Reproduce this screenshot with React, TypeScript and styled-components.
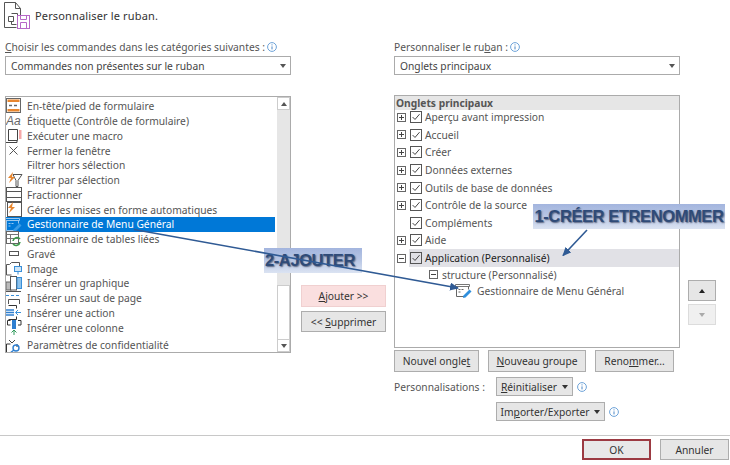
import React from "react";
import styled, { createGlobalStyle } from "styled-components";

const Global = createGlobalStyle`
  html, body { margin: 0; padding: 0; background: #fff; }
  #root { width: 730px; height: 465px; overflow: hidden; }
`;

const Dialog = styled.div`
  position: relative;
  width: 730px;
  height: 465px;
  display: flex;
  flex-direction: column;
  background: #fff;
  color: #444;
  font-family: "Noto Sans", "Open Sans", sans-serif;
  font-size: 10.25px;
  overflow: hidden;
`;
const Header = styled.div`
  height: 33px;
  display: flex;
  align-items: flex-start;
  padding: 2px 0 0 4px;
  box-sizing: border-box;
  gap: 4px;
`;
const Title = styled.div`
  font-size: 11px;
  line-height: 28px;
  color: #333;
  letter-spacing: 0.15px;
`;
const Main = styled.div`
  height: 402px;
  box-sizing: border-box;
  padding: 0 0 0 5px;
  display: flex;
  align-items: flex-start;
`;
const LeftCol = styled.div`
  width: 286px;
  display: flex;
  flex-direction: column;
`;
const Middle = styled.div`
  width: 85px;
  margin: 252px 0 0 10px;
  display: flex;
  flex-direction: column;
  gap: 4px;
`;
const RightCol = styled.div`
  width: 286px;
  margin-left: 8px;
  display: flex;
  flex-direction: column;
`;
const FieldLabel = styled.div`
  height: 23px;
  box-sizing: border-box;
  padding-top: 5px;
  display: flex;
  align-items: center;
  gap: 2px;
  color: #555;
`;
const Select = styled.div`
  height: 19px;
  box-sizing: border-box;
  border: 1px solid #ababab;
  display: flex;
  align-items: center;
  justify-content: space-between;
  padding: 0 4px 0 5px;
  color: #444;
`;
const Caret = styled.span<{ $color?: string }>`
  width: 0;
  height: 0;
  display: inline-block;
  border-left: 3.5px solid transparent;
  border-right: 3.5px solid transparent;
  border-top: 4px solid ${(p) => p.$color || "#555"};
`;
const UCaret = styled.span<{ $color?: string }>`
  width: 0;
  height: 0;
  display: inline-block;
  border-left: 3.5px solid transparent;
  border-right: 3.5px solid transparent;
  border-bottom: 4px solid ${(p) => p.$color || "#555"};
`;
const LeftList = styled.div`
  margin-top: 21px;
  height: 257px;
  box-sizing: border-box;
  border: 1px solid #ababab;
  display: flex;
  overflow: hidden;
`;
const LeftItems = styled.div`
  flex: 1;
  min-width: 0;
  padding-top: 2px;
  overflow: hidden;
`;
const LeftRow = styled.div<{ $selected?: boolean; $gap?: number }>`
  height: 14.75px;
  display: flex;
  align-items: center;
  white-space: nowrap;
  margin-top: ${(p) => p.$gap || 0}px;
  background: ${(p) => (p.$selected ? "#0078d7" : "transparent")};
  color: ${(p) => (p.$selected ? "#fff" : "#555")};
`;
const IconSlot = styled.span`
  width: 21px;
  height: 14px;
  flex: none;
  display: flex;
  align-items: center;
  justify-content: flex-start;
  & > svg {
    margin-left: -3px;
    flex: none;
  }
`;
const Scrollbar = styled.div`
  width: 13px;
  flex: none;
  margin-left: 2px;
  background: #e6e6e6;
  display: flex;
  flex-direction: column;
`;
const ScrollEnd = styled.div`
  height: 13px;
  flex: none;
  background: #fff;
  border: 1px solid #ccc;
  box-sizing: border-box;
  display: flex;
  align-items: center;
  justify-content: center;
`;
const ScrollTrack = styled.div`
  height: 175px;
  flex: none;
`;
const ScrollThumb = styled.div`
  flex: 1;
  background: #fff;
  border-left: 1px solid #ccc;
  border-right: 1px solid #ccc;
  border-top: 1px solid #ccc;
`;
const Btn = styled.div<{ $w?: number; $h?: number; $pink?: boolean; $disabled?: boolean }>`
  width: ${(p) => (p.$w ? p.$w + "px" : "auto")};
  height: ${(p) => p.$h || 22}px;
  box-sizing: border-box;
  display: flex;
  align-items: center;
  justify-content: center;
  gap: 5px;
  flex: none;
  color: #333;
  white-space: nowrap;
  background: ${(p) => (p.$pink ? "#fadfdf" : p.$disabled ? "#f0f0f0" : "#e6e6e6")};
  border: 1px solid ${(p) => (p.$pink ? "#f0d0d0" : p.$disabled ? "#dcdcdc" : "#adadad")};
`;
const OkBtn = styled(Btn)`
  border: 2px solid #9c3a42;
  background: #e8e8e8;
`;
const RightList = styled.div`
  margin-top: 20px;
  height: 253px;
  box-sizing: border-box;
  border: 1px solid #ababab;
  display: flex;
  flex-direction: column;
  overflow: hidden;
`;
const TreeHead = styled.div`
  height: 14px;
  line-height: 14px;
  padding-left: 1px;
  flex: none;
  background: #e6e6e6;
  font-weight: 700;
  color: #555;
`;
const TreeRow = styled.div`
  height: 17.6px;
  display: flex;
  align-items: center;
  flex: none;
  color: #555;
  white-space: nowrap;
  padding-left: 2px;
`;
const Expander = styled.span<{ $hidden?: boolean }>`
  width: 9px;
  height: 9px;
  flex: none;
  box-sizing: border-box;
  border: 1px solid #666;
  position: relative;
  visibility: ${(p) => (p.$hidden ? "hidden" : "visible")};
  &::before {
    content: "";
    position: absolute;
    left: 1px;
    right: 1px;
    top: 3px;
    height: 1px;
    background: #444;
  }
`;
const ExpanderPlus = styled(Expander)`
  &::after {
    content: "";
    position: absolute;
    top: 1px;
    bottom: 1px;
    left: 3px;
    width: 1px;
    background: #444;
  }
`;
const Check = styled.span<{ $ml?: number }>`
  width: 12px;
  height: 12px;
  flex: none;
  margin-left: ${(p) => p.$ml ?? 4}px;
  box-sizing: border-box;
  border: 1px solid #555;
  display: flex;
  align-items: center;
  justify-content: center;
`;
const TreeText = styled.span<{ $strong?: boolean }>`
  margin-left: 3px;
  color: ${(p) => (p.$strong ? "#222" : "#555")};
  flex: 1;
  align-self: stretch;
  display: flex;
  align-items: center;
`;
const HighlightBand = styled.div`
  flex: 1;
  align-self: stretch;
  margin-left: 3px;
  background: #e1e1e6;
  display: flex;
  align-items: center;
`;
const GroupRow = styled.div`
  height: 16px;
  flex: none;
  display: flex;
  align-items: center;
  padding-left: 34px;
  gap: 4px;
  color: #555;
`;
const CommandRow = styled.div`
  height: 16px;
  flex: none;
  display: flex;
  align-items: center;
  padding-left: 58px;
  gap: 4px;
  color: #555;
  white-space: nowrap;
`;
const TreeArea = styled.div`
  margin-top: -1.5px;
  display: flex;
  flex-direction: column;
`;
const ActionRow = styled.div`
  margin-top: 2px;
  display: flex;
  gap: 9px;
`;
const CustomRow = styled.div<{ $mt: number }>`
  margin-top: ${(p) => p.$mt}px;
  display: flex;
  align-items: center;
`;
const CustomLabel = styled.div`
  width: 102px;
  flex: none;
  color: #555;
  white-space: nowrap;
`;
const InfoSlot = styled.span`
  margin-left: 4px;
  display: flex;
`;
const MoveCol = styled.div`
  width: 28px;
  margin: 247px 0 0 8px;
  display: flex;
  flex-direction: column;
  gap: 3px;
`;
const Footer = styled.div`
  height: 30px;
  box-sizing: border-box;
  border-top: 1px solid #c8c8c8;
  padding: 3px 1px 0 0;
  display: flex;
  justify-content: flex-end;
  gap: 9px;
`;
const Callout = styled.div<{ $left: number; $top: number; $w: number; $h: number; $size: number }>`
  position: absolute;
  left: ${(p) => p.$left}px;
  top: ${(p) => p.$top}px;
  width: ${(p) => p.$w}px;
  height: ${(p) => p.$h}px;
  display: flex;
  align-items: center;
  justify-content: ${(p) => (p.$w < 100 ? "flex-start" : "center")};
  box-sizing: border-box;
  padding-left: ${(p) => (p.$w < 100 ? 1 : 0)}px;
  background: linear-gradient(180deg, #a3b5de 0%, #b6c5e4 45%, #dbe3f2 100%);
  font-family: "Liberation Sans", Arial, sans-serif;
  font-weight: 700;
  font-size: ${(p) => p.$size}px;
  letter-spacing: -0.4px;
  color: #2f4b78;
  text-shadow: 1px 1px 1.5px rgba(40, 50, 80, 0.7);
  white-space: nowrap;
`;
const ArrowLayer = styled.svg`
  position: absolute;
  left: 0;
  top: 0;
  pointer-events: none;
`;
const U = styled.span`
  text-decoration: underline;
  text-underline-offset: 1px;
`;

const Info = () => (
  <svg width="10" height="10" viewBox="0 0 10 10">
    <circle cx="5" cy="5" r="4.4" fill="none" stroke="#6ea3d8" strokeWidth="1" />
    <path d="M5 2.4v1M5 4.4v3" stroke="#4a86c5" strokeWidth="1" />
  </svg>
);
const Tick = () => (
  <svg width="10" height="10" viewBox="0 0 11 11">
    <path d="M1.8 5.6 4.4 8.2 9.4 2.4" fill="none" stroke="#444" strokeWidth="1.1" />
  </svg>
);
const S: React.FC<{ children: React.ReactNode }> = ({ children }) => (
  <svg width="20" height="16" viewBox="0 0 20 16" style={{ overflow: "visible" }}>
    {children}
  </svg>
);

const MenuIcon = ({ selected }: { selected?: boolean }) => (
  <svg width="20" height="17" viewBox="0 0 20 17">
    <path d="M2.5 2.5h14v2h-14z" fill="none" stroke={selected ? "#9cc8ee" : "#777"} />
    <path d="M3.5 4.5v10h8M15.5 4.5v3" fill="none" stroke={selected ? "#9cc8ee" : "#666"} />
    <path d="M5.5 7.5h2M8.5 7.5h2M5.5 10h2" stroke={selected ? "#9cc8ee" : "#666"} />
    <path d="M10.5 13.5 16.5 7.5 18.5 9.5 12.5 15.5 10 16z" fill={selected ? "#3a9be6" : "#2f8fdd"} />
  </svg>
);

const icons: Record<string, React.ReactNode> = {
  form: (
    <S>
      <rect x="3.5" y="0.5" width="14" height="14" fill="#fff" stroke="#666" />
      <rect x="4.5" y="1.5" width="12" height="2.5" fill="#e8862e" />
      <rect x="4.5" y="11" width="12" height="2.5" fill="#e8862e" />
      <path d="M6 7.5h3M11 7.5h3" stroke="#666" strokeWidth="1.4" />
    </S>
  ),
  aa: (
    <S>
      <text x="3" y="12" fontFamily="Liberation Sans" fontStyle="italic" fontSize="12" fill="#666">
        Aa
      </text>
    </S>
  ),
  macro: (
    <S>
      <path d="M5.5 1.5h9v11h-9zM3 14.5h11v-2H5" fill="#fff" stroke="#444" />
      <rect x="16" y="2" width="2.5" height="9" fill="#f6a8a8" />
    </S>
  ),
  close: (
    <S>
      <path d="M6.5 3.5 14.5 11.5M14.5 3.5 6.5 11.5" stroke="#555" strokeWidth="1" />
    </S>
  ),
  none: <S>{null}</S>,
  filter: (
    <S>
      <path d="M10 2.5h9l-4 6v6h-2v-6z" fill="#fff" stroke="#555" />
      <path d="M10 0 5 6h3L6 11l6-6H9z" fill="#e8862e" />
    </S>
  ),
  split: (
    <S>
      <rect x="3.5" y="0.5" width="15" height="14" fill="#fff" stroke="#555" />
      <path d="M3.5 4.5h15M3.5 10.5h15" stroke="#555" />
    </S>
  ),
  auto: (
    <S>
      <rect x="4.5" y="0.5" width="14" height="14" fill="#fff" stroke="#555" />
      <path d="M10 0 5 6h3L6 11l6-6H9z" fill="#e8862e" />
    </S>
  ),
  linked: (
    <S>
      <rect x="3.5" y="0.5" width="12" height="12" fill="#fff" stroke="#666" />
      <path d="M3.5 3.5h12M7.5 3.5v9M3.5 7.5h12" stroke="#777" />
      <path d="M10 10a4 4 0 0 1 7-2M17 11a4 4 0 0 1-7 2" fill="none" stroke="#3b9a4a" strokeWidth="1.6" />
    </S>
  ),
  engraved: (
    <S>
      <rect x="6.5" y="5.5" width="9" height="4" fill="#fff" stroke="#555" />
    </S>
  ),
  image: (
    <S>
      <path d="M3.5 14V3.5h3l2-2h8v4M3.5 14h5" fill="none" stroke="#555" />
      <rect x="11.5" y="5.5" width="7" height="5" fill="#cfe6f8" stroke="#3a8fd8" />
      <path d="M15 10.5v3" stroke="#3a8fd8" />
    </S>
  ),
  chart: (
    <S>
      <rect x="3" y="7" width="5" height="8" fill="#bbb" stroke="#666" />
      <rect x="7.5" y="1.5" width="6" height="13.5" fill="#fff" stroke="#555" />
      <rect x="14" y="2.5" width="4.5" height="11" fill="#8fc3ec" stroke="#3a8fd8" />
    </S>
  ),
  pagebreak: (
    <S>
      <path d="M3 1.5h15" stroke="#555" />
      <path d="M3 5.5h15" stroke="#3a8fd8" strokeDasharray="3 2" />
      <path d="M5.5 14V9.5h11V14" fill="none" stroke="#555" />
    </S>
  ),
  action: (
    <S>
      <path d="M5.5 0.5h8v3M5.5 14.5h8v-3" fill="none" stroke="#333" />
      <path d="M3 5h8M3 7.5h8M3 10h8" stroke="#2f7fd0" strokeWidth="1.4" />
      <path d="M18 7.5h-5M15 5l-2.5 2.5L15 10" fill="none" stroke="#3a8fd8" />
    </S>
  ),
  column: (
    <S>
      <path d="M4.5 5V0.5M4.5 0.5h3M18 5V0.5h-3M4.5 5h3M18 5h-3" fill="none" stroke="#333" />
      <rect x="9" y="0" width="4" height="9" fill="#2f7fd0" />
      <path d="M11 15v-5M8.5 12.5 11 10l2.5 2.5" fill="none" stroke="#2f9a5a" />
    </S>
  ),
  privacy: (
    <S>
      <path d="M3.5 15V7h4M14 10V7" fill="none" stroke="#333" />
      <circle cx="13" cy="11" r="3" fill="none" stroke="#2f7fd0" strokeWidth="1.4" />
      <path d="M11 13 7 16" stroke="#2f7fd0" strokeWidth="1.4" />
      <path d="M6 3 9 6M12 3 9 6" stroke="#444" />
    </S>
  ),
};

const leftRows: { t: string; i: string; gap?: number; sel?: boolean }[] = [
  { t: "En-tête/pied de formulaire", i: "form" },
  { t: "Étiquette (Contrôle de formulaire)", i: "aa" },
  { t: "Exécuter une macro", i: "macro" },
  { t: "Fermer la fenêtre", i: "close" },
  { t: "Filtrer hors sélection", i: "none" },
  { t: "Filtrer par sélection", i: "filter" },
  { t: "Fractionner", i: "split" },
  { t: "Gérer les mises en forme automatiques", i: "auto" },
  { t: "Gestionnaire de Menu Général", i: "menu", sel: true },
  { t: "Gestionnaire de tables liées", i: "linked" },
  { t: "Gravé", i: "engraved" },
  { t: "Image", i: "image" },
  { t: "Insérer un graphique", i: "chart" },
  { t: "Insérer un saut de page", i: "pagebreak" },
  { t: "Insérer une action", i: "action" },
  { t: "Insérer une colonne", i: "column" },
  { t: "Paramètres de confidentialité", i: "privacy", gap: 3 },
];

const tabs: { t: string; noExp?: boolean }[] = [
  { t: "Aperçu avant impression" },
  { t: "Accueil" },
  { t: "Créer" },
  { t: "Données externes" },
  { t: "Outils de base de données" },
  { t: "Contrôle de la source" },
  { t: "Compléments", noExp: true },
  { t: "Aide" },
];

const Logo = () => (
  <svg width="27" height="27" viewBox="0 0 27 27">
    <path d="M.5 .5h11l5 6v7M11.5 .5v6h5M.5 .5v25h12" fill="none" stroke="#555" strokeWidth="1" />
    <path d="M7.5 11.5h6v3M4.5 14.5h5v5h-5zM7.5 19.5v3h5" fill="none" stroke="#555" />
    <rect x="13.5" y="13.5" width="12" height="13" fill="#fff" stroke="#b768c8" />
    <path d="M16.5 13.5v4h6v-4M16.5 26.5v-6h6v6" fill="none" stroke="#b768c8" />
  </svg>
);

export default function App() {
  return (
    <Dialog>
      <Global />
      <Header>
        <Logo />
        <Title>Personnaliser le ruban.</Title>
      </Header>
      <Main>
        <LeftCol>
          <FieldLabel>
            <span>
              <U>C</U>hoisir les commandes dans les catégories suivantes :
            </span>
            <Info />
          </FieldLabel>
          <Select>
            <span>Commandes non présentes sur le ruban</span>
            <Caret />
          </Select>
          <LeftList>
            <LeftItems>
              {leftRows.map((r) => (
                <LeftRow key={r.t} $selected={r.sel} $gap={r.gap}>
                  <IconSlot>{r.i === "menu" ? <MenuIcon selected /> : icons[r.i]}</IconSlot>
                  {r.t}
                </LeftRow>
              ))}
            </LeftItems>
            <Scrollbar>
              <ScrollEnd>
                <UCaret />
              </ScrollEnd>
              <ScrollTrack />
              <ScrollThumb />
              <ScrollEnd>
                <Caret />
              </ScrollEnd>
            </Scrollbar>
          </LeftList>
        </LeftCol>
        <Middle>
          <Btn $h={22} $pink>
            <span>
              <U>A</U>jouter &gt;&gt;
            </span>
          </Btn>
          <Btn $h={21}>
            <span>
              &lt;&lt; <U>S</U>upprimer
            </span>
          </Btn>
        </Middle>
        <RightCol>
          <FieldLabel>
            <span>
              Personnaliser le ru<U>b</U>an :
            </span>
            <Info />
          </FieldLabel>
          <Select>
            <span>Onglets principaux</span>
            <Caret />
          </Select>
          <RightList>
            <TreeHead>Onglets principaux</TreeHead>
            <TreeArea>
              {tabs.map((r) => (
                <TreeRow key={r.t}>
                  {r.noExp ? <Expander $hidden /> : <ExpanderPlus />}
                  <Check>
                    <Tick />
                  </Check>
                  <TreeText>{r.t}</TreeText>
                </TreeRow>
              ))}
              <TreeRow>
                <Expander />
                <HighlightBand>
                  <Check $ml={1}>
                    <Tick />
                  </Check>
                  <TreeText $strong>Application (Personnalisé)</TreeText>
                </HighlightBand>
              </TreeRow>
              <GroupRow>
                <Expander />
                structure (Personnalisé)
              </GroupRow>
              <CommandRow>
                <MenuIcon />
                Gestionnaire de Menu Général
              </CommandRow>
            </TreeArea>
          </RightList>
          <ActionRow>
            <Btn $w={85}>
              <span>
                Nouvel ongle<U>t</U>
              </span>
            </Btn>
            <Btn $w={98}>
              <span>
                <U>N</U>ouveau groupe
              </span>
            </Btn>
            <Btn $w={79}>
              <span>
                Reno<U>m</U>mer...
              </span>
            </Btn>
          </ActionRow>
          <CustomRow $mt={5}>
            <CustomLabel>Personnalisations :</CustomLabel>
            <Btn $w={77} $h={19}>
              <span>
                <U>R</U>éinitialiser
              </span>
              <Caret $color="#333" />
            </Btn>
            <InfoSlot>
              <Info />
            </InfoSlot>
          </CustomRow>
          <CustomRow $mt={6}>
            <CustomLabel />
            <Btn $w={109} $h={19}>
              <span>
                Im<U>p</U>orter/Exporter
              </span>
              <Caret $color="#333" />
            </Btn>
            <InfoSlot>
              <Info />
            </InfoSlot>
          </CustomRow>
        </RightCol>
        <MoveCol>
          <Btn $h={21}>
            <UCaret $color="#222" />
          </Btn>
          <Btn $h={21} $disabled>
            <Caret $color="#aaa" />
          </Btn>
        </MoveCol>
      </Main>
      <Footer>
        <OkBtn $w={69} $h={21}>
          OK
        </OkBtn>
        <Btn $w={69} $h={21}>
          Annuler
        </Btn>
      </Footer>
      <Callout $left={264} $top={248} $w={98} $h={25} $size={16.5}>
        2-AJOUTER
      </Callout>
      <Callout $left={533} $top={204} $w={192} $h={25} $size={16.5}>
        1-CRÉER ETRENOMMER
      </Callout>
      <ArrowLayer width="730" height="465" viewBox="0 0 730 465">
        <defs>
          <marker id="head" markerWidth="9" markerHeight="8" refX="8" refY="4" orient="auto" markerUnits="userSpaceOnUse">
            <path d="M0 0 9 4 0 8z" fill="#2f5a94" />
          </marker>
        </defs>
        <path d="M134 229.5 458 288" stroke="#2f5a94" strokeWidth="1.6" markerEnd="url(#head)" />
        <path d="M587 230 563 255.5" stroke="#2f5a94" strokeWidth="1.6" markerEnd="url(#head)" />
      </ArrowLayer>
    </Dialog>
  );
}
